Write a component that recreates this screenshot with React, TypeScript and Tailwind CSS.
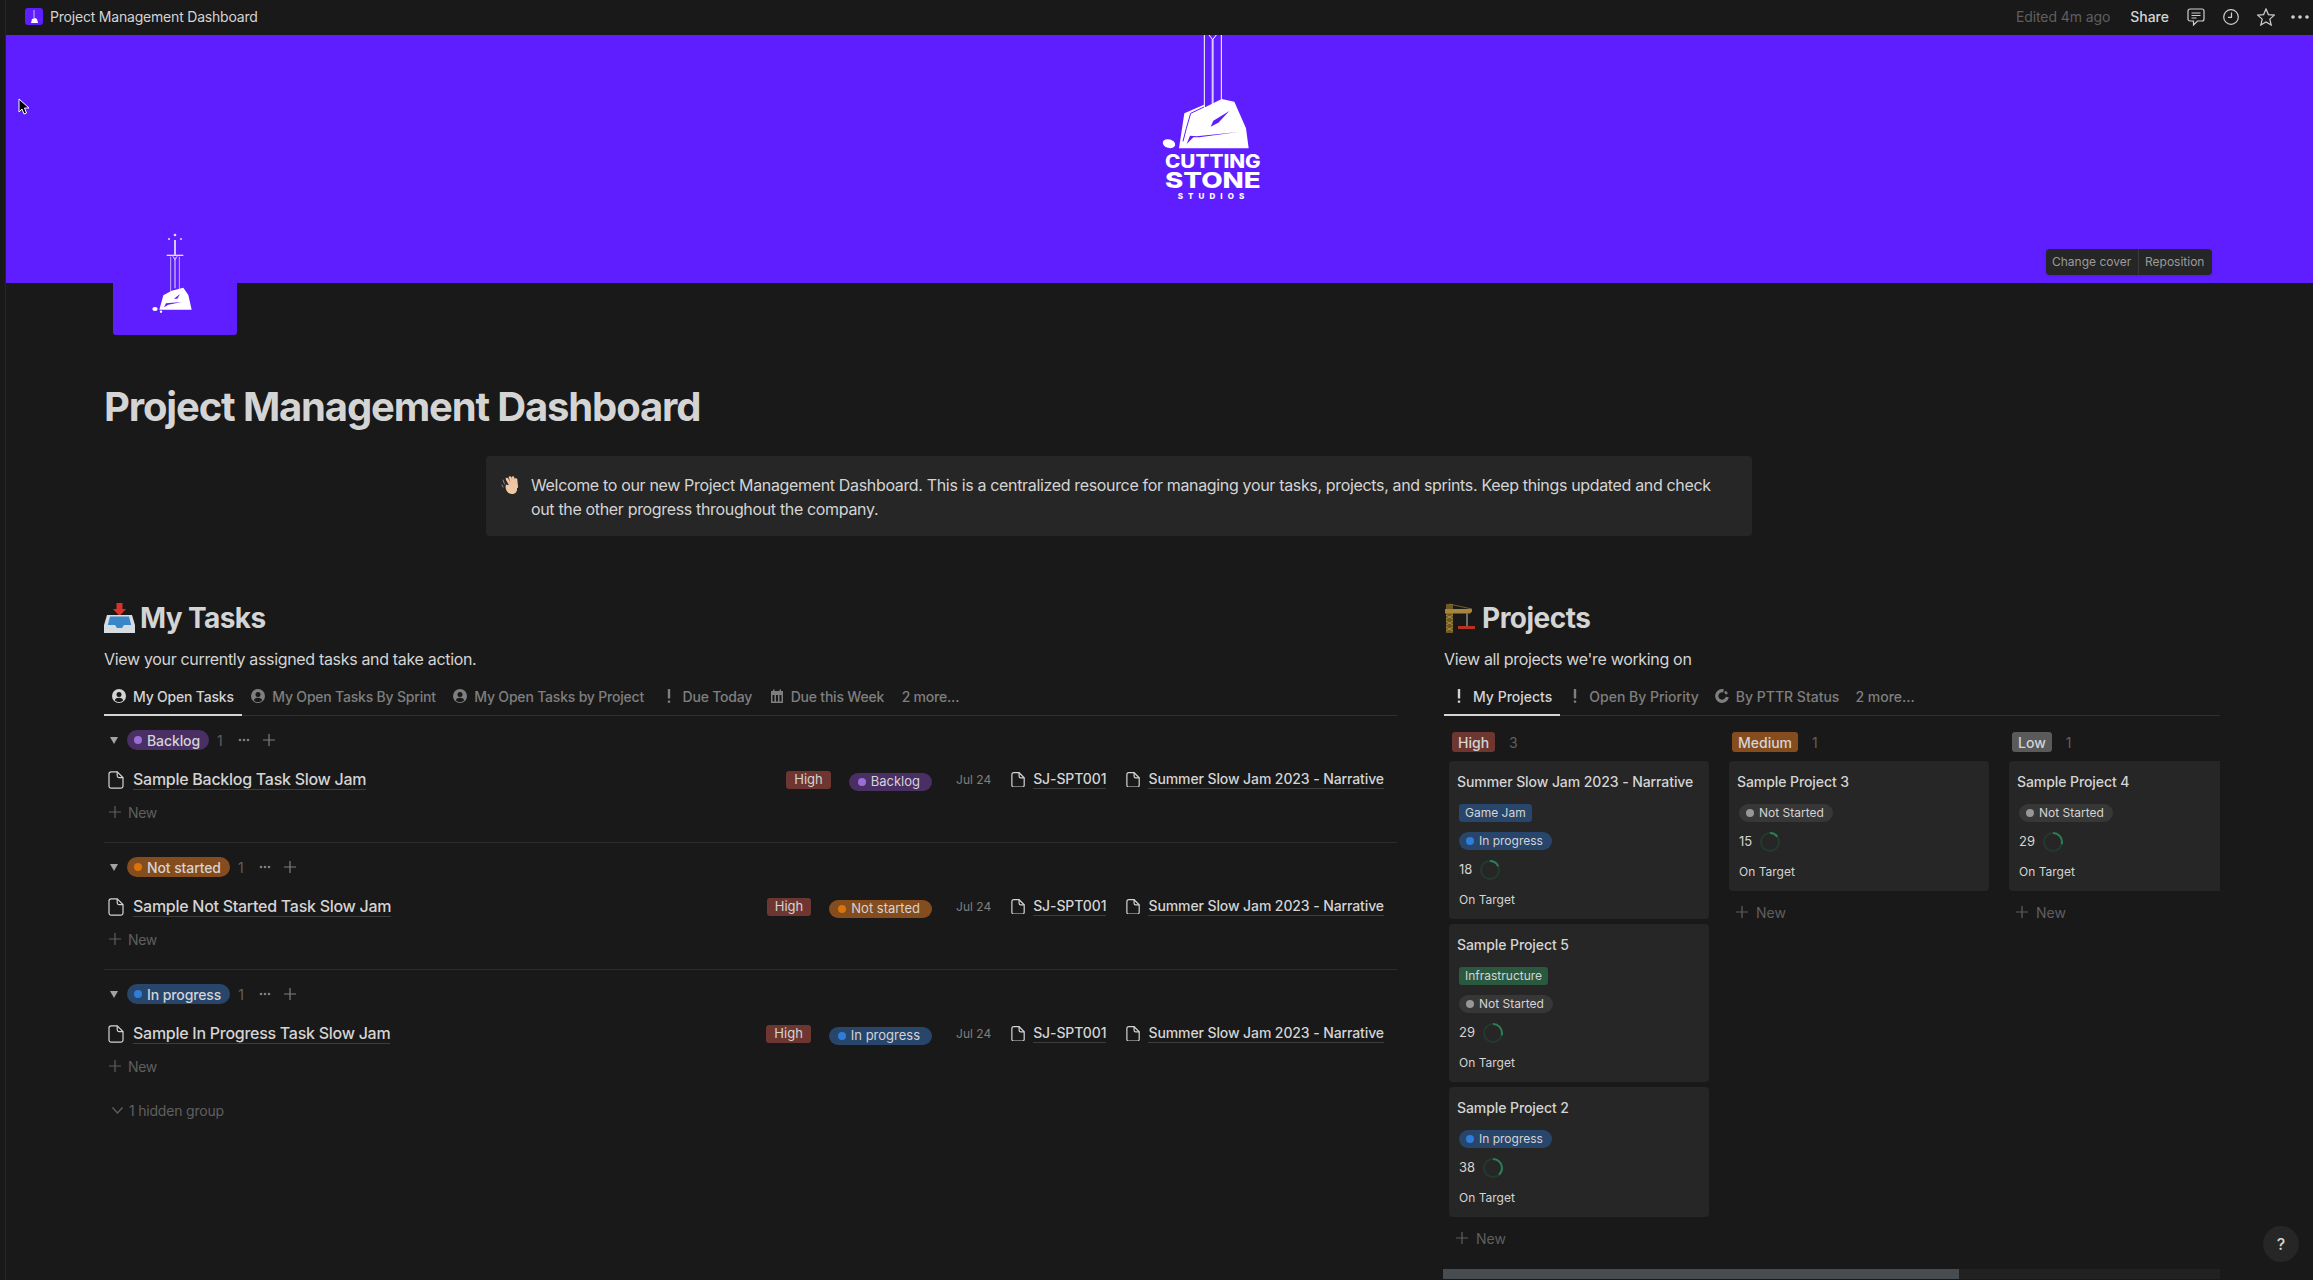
import React from "react";

const FileIcon = ({ s = 1 }: { s?: number }) => (
  <svg width={16 * s} height={18 * s} viewBox="0 0 16 18" fill="none" stroke="#d4d4d4" strokeWidth={1.2 / s} className="shrink-0">
    <path d="M3.2.8h6L15 6.6V15a2.2 2.2 0 0 1-2.2 2.2H3.2A2.2 2.2 0 0 1 1 15V3A2.2 2.2 0 0 1 3.2.8z" />
    <path d="M9.2.8v4a1.8 1.8 0 0 0 1.8 1.8h4" />
  </svg>
);

const Plus = ({ c = "#5f5f5f", s = 12 }: { c?: string; s?: number }) => (
  <svg width={s} height={s} viewBox="0 0 12 12" stroke={c} strokeWidth="1.2" className="shrink-0">
    <path d="M6 0v12M0 6h12" />
  </svg>
);

const Person = ({ c }: { c: string }) => (
  <svg width="14" height="14" viewBox="0 0 14 14" className="shrink-0">
    <circle cx="7" cy="7" r="7" fill={c} />
    <circle cx="7" cy="5.4" r="2.5" fill="#191919" />
    <path d="M2.8 11.2C3.6 9.4 5 8.7 7 8.7s3.4.7 4.2 2.5C10.2 12.3 8.7 13 7 13s-3.2-.7-4.2-1.8z" fill="#191919" />
  </svg>
);

const Bang = ({ c }: { c: string }) => (
  <svg width="14" height="14" viewBox="0 0 14 14" className="shrink-0">
    <rect x="5.8" y="0" width="2.4" height="9.5" rx="0.6" fill={c} />
    <rect x="5.8" y="11.4" width="2.4" height="2.4" rx="0.6" fill={c} />
  </svg>
);

const Cal = ({ c }: { c: string }) => (
  <svg width="14" height="14" viewBox="0 0 14 14" className="shrink-0">
    <path fill={c} d="M1 2h2V.5h1.5V2h5V.5H11V2h2v12H1zM2.5 6v6.6h2V6zm3.5 0v6.6h2V6zm3.5 0v6.6h2V6z" />
  </svg>
);

const Gauge = ({ c }: { c: string }) => (
  <svg width="14" height="14" viewBox="0 0 14 14" fill="none" stroke={c} strokeWidth="3.2" className="shrink-0">
    <path d="M8.5 1.9A5.3 5.3 0 1 0 12.3 8" />
    <path d="M10 2.6l2 2.4" strokeWidth="2.4" />
  </svg>
);

const Tab = ({ icon, label, active, tight }: { icon?: React.ReactNode; label: string; active?: boolean; tight?: boolean }) => (
  <div className={`flex items-center gap-[7px] h-[36px] px-2 text-[14px] font-medium -mb-[1px] border-b-2 pb-[2px] ${tight ? "tracking-[-0.2px]" : ""} ${active ? "text-[#d4d4d4] border-[#d4d4d4]" : "text-[#7f7f7f] border-transparent"}`}>
    {icon}
    <span className="whitespace-nowrap">{label}</span>
  </div>
);

const pill = {
  Backlog: { bg: "bg-[#492f64]", dot: "bg-[#9a6dd7]" },
  "Not started": { bg: "bg-[#854c1d]", dot: "bg-[#d9730d]" },
  "In progress": { bg: "bg-[#28456c]", dot: "bg-[#2e7dd8]" },
  "Not Started": { bg: "bg-[#373737]", dot: "bg-[#979797]" },
} as const;

type PillName = keyof typeof pill;

const SmallPill = ({ name, big }: { name: PillName; big?: boolean }) => (
  <span className={`inline-flex items-center h-[18px] rounded-full gap-[5px] text-[#d4d4d4] whitespace-nowrap ${big ? "text-[13px] pl-[9px] pr-[12px]" : "text-[12px] pl-[7px] pr-[9px]"} ${pill[name].bg}`}>
    <span className={`w-2 h-2 rounded-full ${pill[name].dot}`} />
    {name}
  </span>
);

const Group = ({ name, title, divider }: { name: PillName; title: string; divider?: boolean }) => (
  <div className={`pt-[14px] ${divider ? "pb-[14px] border-b border-[#2b2b2b]" : ""}`}>
    <div className="flex items-center h-[20px]">
      <svg width="8" height="7" viewBox="0 0 8 7" className="ml-[6px] shrink-0"><path d="M0 0h8L4 7z" fill="#a3a3a3" /></svg>
      <span className={`ml-[9px] inline-flex items-center h-[20px] rounded-full pl-[7px] pr-[9px] gap-[5px] text-[14px] font-medium tracking-[-0.1px] text-[#d4d4d4] whitespace-nowrap ${pill[name].bg}`}>
        <span className={`w-2 h-2 rounded-full ${pill[name].dot}`} />
        {name}
      </span>
      <span className="ml-[8px] text-[14px] text-[#5f5f5f]">1</span>
      <svg width="12" height="4" viewBox="0 0 12 4" className="ml-[15px]" fill="#7f7f7f"><circle cx="2" cy="2" r="1.3" /><circle cx="6" cy="2" r="1.3" /><circle cx="10" cy="2" r="1.3" /></svg>
      <span className="ml-[13px]"><Plus c="#7f7f7f" /></span>
    </div>
    <div className="flex items-center h-[34px] mt-[12px] pt-[1px] pl-[4px] pr-[13px]">
      <FileIcon />
      <span className="ml-[9px] text-[16px] font-medium tracking-[-0.27px] leading-[19px] text-[#d4d4d4] border-b border-[#3d3d3d] whitespace-nowrap">{title}</span>
      <div className="ml-auto flex items-center">
        <span className="h-[18px] flex items-center rounded-[3px] px-2 bg-[#6e3630] text-[13px] text-[#d4d4d4]">High</span>
        <span className="ml-[18px]"><SmallPill name={name} big /></span>
        <span className="ml-[24px] w-[34px] text-[12px] text-[#7f7f7f] whitespace-nowrap">Jul 24</span>
        <span className="ml-[21px]"><FileIcon s={0.88} /></span>
        <span className="ml-[8px] text-[14px] font-medium tracking-[-0.1px] leading-[18px] text-[#d4d4d4] border-b border-[#3d3d3d]">SJ-SPT001</span>
        <span className="ml-[20px]"><FileIcon s={0.88} /></span>
        <span className="ml-[8px] text-[14px] font-medium tracking-[-0.1px] leading-[18px] text-[#d4d4d4] border-b border-[#3d3d3d] whitespace-nowrap">Summer Slow Jam 2023 - Narrative</span>
      </div>
    </div>
    <div className="flex items-center h-[32px] pl-[4px] gap-[7px] text-[14px] tracking-[-0.3px] text-[#5f5f5f]">
      <span className="ml-[1px]"><Plus /></span>New
    </div>
  </div>
);

const Ring = ({ pct }: { pct: number }) => {
  const c = 2 * Math.PI * 9;
  return (
    <svg width="20" height="20" viewBox="0 0 20 20" fill="none" strokeWidth="2" className="shrink-0 -rotate-90">
      <circle cx="10" cy="10" r="9" stroke="#233a2d" />
      <circle cx="10" cy="10" r="9" stroke="#2b8057" strokeDasharray={`${(pct / 100) * c} ${c}`} />
    </svg>
  );
};

const Card = ({ title, tag, status, num }: { title: string; tag?: "Game Jam" | "Infrastructure"; status: PillName; num: number }) => (
  <div className="rounded-[4px] bg-[#262626] pt-[11px] pb-[10px] pl-[8px]">
    <div className="h-[20px] leading-[20px] text-[14px] font-medium tracking-[-0.08px] text-[#d4d4d4] whitespace-nowrap">{title}</div>
    <div className="pl-[2px] mt-[12px] flex flex-col gap-[10px] items-start">
      {tag && (
        <span className={`h-[18px] flex items-center rounded-[3px] px-[6px] text-[12px] text-[#d4d4d4] ${tag === "Game Jam" ? "bg-[#28456c]" : "bg-[#2b593f]"}`}>{tag}</span>
      )}
      <SmallPill name={status} />
      <div className="flex items-center h-[20px] gap-[8px] text-[13px] text-[#d4d4d4]">
        {num}
        <Ring pct={num} />
      </div>
      <div className="h-[18px] leading-[18px] mt-[1px] text-[12px] text-[#d4d4d4]">On Target</div>
    </div>
  </div>
);

const NewRow = () => (
  <div className="flex items-center h-[32px] mt-[5px] pl-[7px] gap-[8px] text-[14px] text-[#5f5f5f]">
    <Plus />New
  </div>
);

const Column = ({ label, bg, count, children, w }: { label: string; bg: string; count: number; children: React.ReactNode; w: string }) => (
  <div className={`flex flex-col shrink-0 ${w}`}>
    <div className="flex items-center h-[20px] pl-[3px] mb-[9px]">
      <span className={`h-[20px] flex items-center rounded-[3px] px-[6px] text-[14px] font-medium text-[#d4d4d4] ${bg}`}>{label}</span>
      <span className="ml-[14px] text-[14px] text-[#5f5f5f]">{count}</span>
    </div>
    <div className="flex flex-col gap-[5px]">{children}</div>
    <NewRow />
  </div>
);

export default function App() {
  return (
    <div className="relative flex w-[2313px] h-[1280px] overflow-hidden bg-[#191919] [font-family:Inter,sans-serif]">
      <div className="w-[6px] shrink-0 border-r border-[#262626]" />
      <div className="flex-1 min-w-0 flex flex-col">
        {/* top bar */}
        <div className="h-[35px] shrink-0 flex items-center pl-[19px] pr-[4px] pb-[2px]">
          <span className="w-[18px] h-[17px] rounded-[3px] bg-[#5f1eff] flex items-center justify-center">
            <svg width="10" height="14" viewBox="0 0 10 14"><path d="M5 0v8" stroke="#c9b5ff" strokeWidth="1" /><path d="M2 13l1-4 3-1 2 1 1 4z" fill="#fff" /></svg>
          </span>
          <span className="ml-[7px] text-[14px] tracking-[-0.2px] text-[#d4d4d4]">Project Management Dashboard</span>
          <span className="ml-auto text-[14px] tracking-[-0.1px] text-[#5f5f5f]">Edited 4m ago</span>
          <span className="ml-[20px] text-[14px] font-medium text-[#d4d4d4]">Share</span>
          <svg className="ml-[18px]" width="18" height="18" viewBox="0 0 18 18" fill="none" stroke="#cfcfcf" strokeWidth="1.2">
            <path d="M3 1h12a2 2 0 0 1 2 2v8a2 2 0 0 1-2 2h-4.5L6.5 17v-4H3a2 2 0 0 1-2-2V3a2 2 0 0 1 2-2z" />
            <path d="M4.5 5h9M4.5 7.5h9M4.5 10h5" />
          </svg>
          <svg className="ml-[18px]" width="16" height="16" viewBox="0 0 16 16" fill="none" stroke="#cfcfcf" strokeWidth="1.2">
            <circle cx="8" cy="8" r="7.3" />
            <path d="M8.5 3.5V8.3H5" />
          </svg>
          <svg className="ml-[18px]" width="18" height="18" viewBox="0 0 18 18" fill="none" stroke="#cfcfcf" strokeWidth="1.2">
            <path d="M9 1l2.4 5.6 6 .5-4.6 4 1.4 5.9L9 13.9 3.8 17l1.4-5.9-4.6-4 6-.5z" />
          </svg>
          <svg className="ml-[16px]" width="18" height="4" viewBox="0 0 18 4" fill="#cfcfcf">
            <circle cx="2" cy="2" r="1.8" /><circle cx="9" cy="2" r="1.8" /><circle cx="16" cy="2" r="1.8" />
          </svg>
        </div>

        {/* cover */}
        <div className="relative h-[248px] shrink-0 bg-[#5f1eff]">
          <svg className="absolute left-[994px] top-0" width="400" height="195" viewBox="0 105 1200 585">
            <path d="M613 105V320M664 105V300" stroke="#fff" strokeWidth="3" fill="none" />
            <path d="M638 118V315" stroke="#d9ccff" strokeWidth="6" fill="none" />
            <path d="M627 105l11 14 11-14" stroke="#fff" strokeWidth="3" fill="none" />
            <path d="M537 445L553 340 612 314 615 322 665 297 703 305 738 385 746 445z" fill="#fff" />
            <path d="M612 321L572 340 559 385 549 424" stroke="#5f1eff" strokeWidth="3" fill="none" />
            <path d="M632 380L640 362 688 333 655 368z" fill="#5f1eff" />
            <path d="M560 432L570 407 590 409 715 396 598 412 580 412z" fill="#5f1eff" />
            <ellipse cx="507" cy="431" rx="19" ry="13" fill="#fff" transform="rotate(15 507 431)" />
            <text x="495" y="505" fontSize="55" fontWeight="800" fill="#fff" textLength="287" lengthAdjust="spacingAndGlyphs">CUTTING</text>
            <text x="495" y="563" fontSize="66" fontWeight="800" fill="#fff" textLength="287" lengthAdjust="spacingAndGlyphs">STONE</text>
            <text x="533" y="597" fontSize="24" fontWeight="800" fill="#fff" textLength="200" lengthAdjust="spacing">STUDIOS</text>
          </svg>
          <div className="absolute left-[2040px] top-[214px] flex h-[26px] items-center rounded-[4px] bg-[#262626] text-[12px] text-[#9b9b9b] shadow">
            <span className="px-[6px] w-[92px] whitespace-nowrap">Change cover</span>
            <span className="w-[1px] h-full bg-[#3a3a3a]" />
            <span className="pl-[6px] w-[73px] whitespace-nowrap">Reposition</span>
          </div>
        </div>

        {/* page icon */}
        <div className="relative ml-[107px] -mt-[72px] w-[124px] h-[124px] shrink-0 rounded-[3px] bg-[#5f1eff]">
          <svg width="124" height="124" viewBox="39 -27 372 372">
            <g fill="none" stroke="#d9ccff" strokeWidth="2.5">
              <path d="M212 110V215M238 110V210" />
              <path d="M225 112V205" strokeWidth="3.5" />
              <path d="M200 106H250" strokeWidth="4" stroke="#e5dcff" />
              <path d="M225 60V104" strokeWidth="5" stroke="#f0ebff" />
              <path d="M218 108l7 12 7-12" />
            </g>
            <circle cx="225" cy="45" r="4" fill="#e5dcff" />
            <circle cx="207" cy="57" r="3" fill="#e5dcff" />
            <circle cx="243" cy="57" r="3" fill="#e5dcff" />
            <path d="M178 269L190 226 215 212 250 203 265 225 275 269z" fill="#fff" />
            <path d="M222 236L240 222 232 236zM192 262L198 250 245 246 205 254z" fill="#5f1eff" />
            <ellipse cx="165" cy="267" rx="8" ry="6" fill="#fff" />
            <circle cx="183" cy="275" r="3.5" fill="#fff" />
          </svg>
        </div>

        {/* content */}
        <div className="pl-[98px] flex flex-col">
          <h1 className="mt-[48px] h-[48px] leading-[48px] text-[40px] font-bold tracking-[-1.15px] text-[#d4d4d4] whitespace-nowrap">Project Management Dashboard</h1>

          <div className="mt-[25px] ml-[382px] w-[1266px] h-[80px] rounded-[4px] bg-[#262626] flex pt-[17px] pl-[15px]">
            <svg width="20" height="20" viewBox="0 0 20 20" className="mt-[2px] shrink-0" fill="none" strokeLinecap="round">
              <path d="M6 4l4.500 8M9 2.500l3.500 9M12 2.500l2.500 9M15 4.500l.8 7.500" stroke="#eec4a2" strokeWidth="2.600" />
              <path d="M5 9.500c-1.500 4 1 9 5.500 9.500 3.500.3 6-2 5.500-6l-.2-3H7z" fill="#f0c7a5" />
              <path d="M2 5l1.500 4M1 10l1 2" stroke="#8a8a8a" strokeWidth="1" />
            </svg>
            <p className="ml-[10px] w-[1200px] text-[16px] leading-[24px] tracking-[-0.34px] text-[#d4d4d4]">
              Welcome to our new Project Management Dashboard. This is a centralized resource for managing your tasks, projects, and sprints. Keep things updated and check out the other progress throughout the company.
            </p>
          </div>

          <div className="mt-[64px] flex gap-[47px]">
            {/* left */}
            <div className="w-[1293px] shrink-0">
              <div className="flex items-center h-[36px] gap-[5px]">
                <svg width="31" height="30" viewBox="0 0 31 30" className="shrink-0">
                  <path d="M12.500 0h6v6h3.500l-6.500 7-6.500-7h3.500z" fill="#d8332a" />
                  <path d="M3 12h25l3 10v8H0v-8z" fill="#d6dce0" />
                  <path d="M6 13.500h19l2.200 8.500H20l-2 3h-5l-2-3H3.800z" fill="#3a86c8" />
                </svg>
                <span className="text-[28px] leading-[36px] font-bold tracking-[-0.6px] text-[#d4d4d4]">My Tasks</span>
              </div>
              <p className="mt-[11px] text-[16px] leading-[24px] tracking-[-0.33px] text-[#d4d4d4]">View your currently assigned tasks and take action.</p>
              <div className="mt-[9px] flex items-center gap-[1.5px] border-b border-[#2f2f2f] h-[36px]">
                <Tab tight active icon={<Person c="#d4d4d4" />} label="My Open Tasks" />
                <Tab tight icon={<Person c="#7f7f7f" />} label="My Open Tasks By Sprint" />
                <Tab tight icon={<Person c="#7f7f7f" />} label="My Open Tasks by Project" />
                <Tab tight icon={<Bang c="#7f7f7f" />} label="Due Today" />
                <Tab tight icon={<Cal c="#7f7f7f" />} label="Due this Week" />
                <Tab tight label="2 more..." />
              </div>
              <Group name="Backlog" title="Sample Backlog Task Slow Jam" divider />
              <Group name="Not started" title="Sample Not Started Task Slow Jam" divider />
              <Group name="In progress" title="Sample In Progress Task Slow Jam" />
              <div className="mt-[16px] h-[24px] flex items-center pl-[8px] gap-[6px] text-[14px] tracking-[-0.2px] text-[#5f5f5f]">
                <svg width="11" height="7" viewBox="0 0 11 7" fill="none" stroke="#5f5f5f" strokeWidth="1.300"><path d="M.5.500l5 5.500 5-5.500" /></svg>
                1 hidden group
              </div>
            </div>

            {/* right */}
            <div className="w-[776px] shrink-0">
              <div className="flex items-center h-[36px] gap-[6px]">
                <svg width="32" height="30" viewBox="0 0 32 30" className="shrink-0">
                  <path d="M2 1h7v29H2z" fill="#6b5a26" />
                  <path d="M2 12l7 4M9 12l-7 4M2 18l7 4M9 18l-7 4M2 24l7 4M9 24l-7 4" stroke="#b8923c" strokeWidth="0.800" />
                  <path d="M1 6h27v2.500l-2 2H1z" fill="#a8853a" />
                  <path d="M5 1l23 5" stroke="#8a7030" strokeWidth="0.800" />
                  <path d="M23 10.500V23" stroke="#a5a5a5" strokeWidth="1.200" />
                  <path d="M14 23h17v3H14z" fill="#b8321f" />
                </svg>
                <span className="text-[28px] leading-[36px] font-bold tracking-[-0.5px] text-[#d4d4d4]">Projects</span>
              </div>
              <p className="mt-[11px] text-[16px] leading-[24px] tracking-[-0.33px] text-[#d4d4d4]">View all projects we're working on</p>
              <div className="mt-[9px] flex items-center border-b border-[#2f2f2f] h-[36px]">
                <Tab active icon={<Bang c="#d4d4d4" />} label="My Projects" />
                <Tab icon={<Bang c="#7f7f7f" />} label="Open By Priority" />
                <Tab icon={<Gauge c="#7f7f7f" />} label="By PTTR Status" />
                <Tab label="2 more..." />
              </div>
              <div className="mt-[16px] pl-[5px] flex gap-[20px] overflow-hidden">
                <Column label="High" bg="bg-[#6e3630]" count={3} w="w-[260px]">
                  <Card title="Summer Slow Jam 2023 - Narrative" tag="Game Jam" status="In progress" num={18} />
                  <Card title="Sample Project 5" tag="Infrastructure" status="Not Started" num={29} />
                  <Card title="Sample Project 2" status="In progress" num={38} />
                </Column>
                <Column label="Medium" bg="bg-[#854c1d]" count={1} w="w-[260px]">
                  <Card title="Sample Project 3" status="Not Started" num={15} />
                </Column>
                <Column label="Low" bg="bg-[#5a5a5a]" count={1} w="w-[260px]">
                  <Card title="Sample Project 4" status="Not Started" num={29} />
                </Column>
              </div>
              <div className="mt-[15px] h-[10px] -ml-[1px] bg-[#212121]">
                <div className="w-[516px] h-full bg-[#474c50]" />
              </div>
            </div>
          </div>
        </div>
      </div>

      <svg className="absolute left-[18px] top-[98px]" width="12" height="18" viewBox="0 0 12 18">
        <path d="M1 1v13l3-3 2 5 2.500-1-2-5h4.500z" fill="#000" stroke="#fff" strokeWidth="1" />
      </svg>
      <div className="absolute left-[2263px] top-[1226px] w-[36px] h-[36px] rounded-full bg-[#262626] flex items-center justify-center text-[16px] font-medium text-[#d4d4d4]">?</div>
    </div>
  );
}
